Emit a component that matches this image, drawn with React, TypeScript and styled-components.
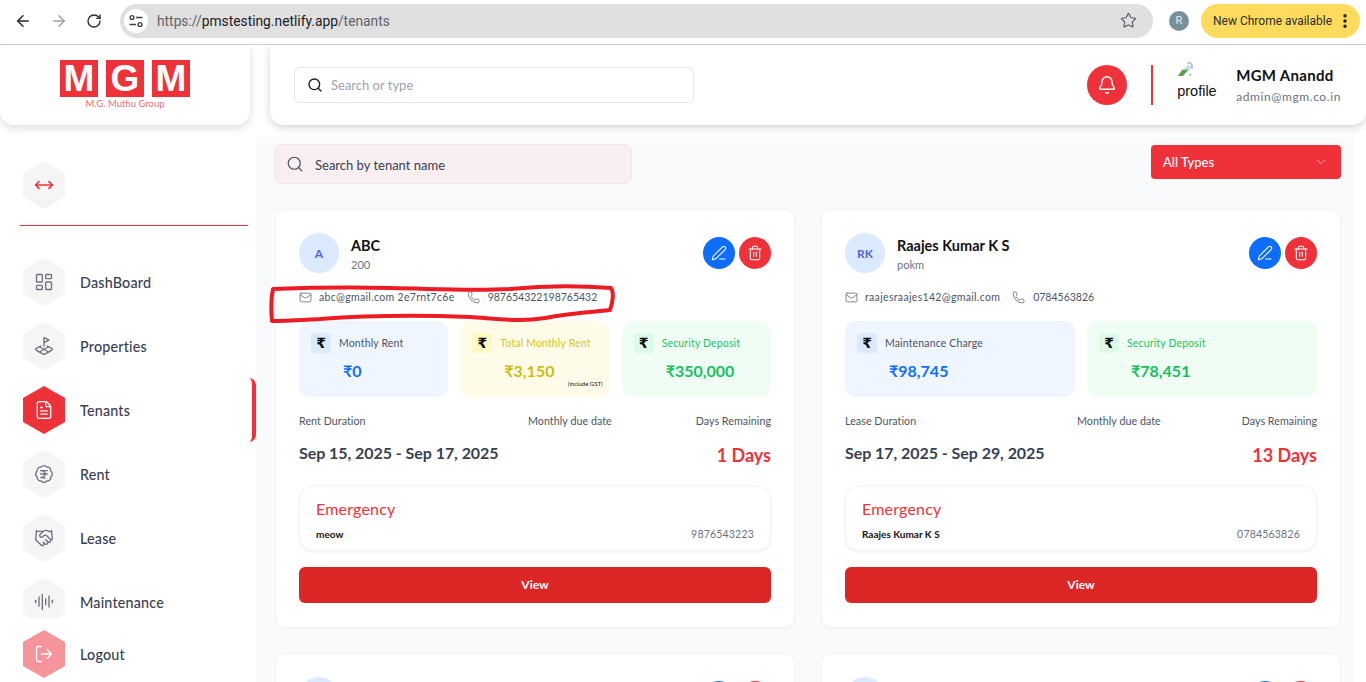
import React from "react";
import styled, { createGlobalStyle } from "styled-components";
import {
	ArrowLeft, ArrowRight, AudioLines, BadgeIndianRupee, Bell, ChevronDown, EllipsisVertical, FileText,
	Handshake, LandPlot, LayoutDashboard, LogOut, Mail, MoveHorizontal, PenLine, Phone, RotateCw, Search,
	Star, Trash2
} from "lucide-react";

const RED = "#ef3239";
const APP_FONT = `"Lato", "Noto Sans", sans-serif`;

const GlobalStyle = createGlobalStyle`
	html, body {
		margin: 0;
		height: 100%;
		overflow: hidden;
		background: #fff;
	}
	* { box-sizing: border-box; }
	body { font-family: ${APP_FONT}; }
`;

type Tone = "blue" | "yellow" | "green";

const TONES: Record<Tone, { bg: string; chip: string; label: string; value: string }> = {
	blue: { bg: "#eff6ff", chip: "#dbeafe", label: "#4b5563", value: "#0d6efd" },
	yellow: { bg: "#fefce8", chip: "#fef9c3", label: "#d6c422", value: "#cabd15" },
	green: { bg: "#f0fdf4", chip: "#dcfce7", label: "#22c55e", value: "#16c060" },
};

const navItems = [
	{ label: "DashBoard", icon: LayoutDashboard },
	{ label: "Properties", icon: LandPlot },
	{ label: "Tenants", icon: FileText, active: true },
	{ label: "Rent", icon: BadgeIndianRupee },
	{ label: "Lease", icon: Handshake },
	{ label: "Maintenance", icon: AudioLines },
];

const tenants = [
	{
		initials: "A", name: "ABC", sub: "200", email: "abc@gmail.com 2e7rnt7c6e", phone: "987654322198765432",
		stats: [
			{ tone: "blue" as Tone, label: "Monthly Rent", value: "₹0" },
			{ tone: "yellow" as Tone, label: "Total Monthly Rent", value: "₹3,150", note: "(include GST)" },
			{ tone: "green" as Tone, label: "Security Deposit", value: "₹350,000" },
		],
		durationLabel: "Rent Duration", dueAt: 229, duration: "Sep 15, 2025 - Sep 17, 2025", days: "1 Days",
		contact: "meow", contactPhone: "9876543223",
	},
	{
		initials: "RK", name: "Raajes Kumar K S", sub: "pokm", email: "raajesraajes142@gmail.com", phone: "0784563826",
		stats: [
			{ tone: "blue" as Tone, label: "Maintenance Charge", value: "₹98,745" },
			{ tone: "green" as Tone, label: "Security Deposit", value: "₹78,451" },
		],
		durationLabel: "Lease Duration", dueAt: 232, duration: "Sep 17, 2025 - Sep 29, 2025", days: "13 Days",
		contact: "Raajes Kumar K S", contactPhone: "0784563826",
	},
];

const TenantActions = () => (
	<Actions>
		<RoundButton $bg="#0d6efd"><PenLine size={16} strokeWidth={1.6} /></RoundButton>
		<RoundButton $bg={RED}><Trash2 size={16} strokeWidth={1.6} /></RoundButton>
	</Actions>
);

export default function App(): React.ReactElement {
	return (
		<Root>
			<GlobalStyle />
			<BrowserBar>
				<BrowserIcon $left={14}><ArrowLeft size={18} strokeWidth={2} /></BrowserIcon>
				<BrowserIcon $left={18} $muted><ArrowRight size={18} strokeWidth={2} /></BrowserIcon>
				<BrowserIcon $left={18}><RotateCw size={16} strokeWidth={2} /></BrowserIcon>
				<Omnibox>
					<TuneBadge>
						<svg width="16" height="16" viewBox="0 0 16 16" fill="none" stroke="#3c4043" strokeWidth="1.4">
							<circle cx="4" cy="4.5" r="1.9" />
							<path d="M8 4.5h6.5M1.5 11.5H8" />
							<circle cx="12" cy="11.5" r="1.9" />
						</svg>
					</TuneBadge>
					<UrlText>https://<b>pmstesting.netlify.app</b>/tenants</UrlText>
					<Star size={17} strokeWidth={1.7} color="#5f6368" />
				</Omnibox>
				<ChromeAvatar>R</ChromeAvatar>
				<UpdatePill>
					New Chrome available
					<EllipsisVertical size={18} strokeWidth={2.6} color="#1f1f1f" />
				</UpdatePill>
			</BrowserBar>

			<Page>
				<Sidebar>
					<LogoCard>
						<LogoMark>
							<LogoTile>M</LogoTile>
							<LogoTile>G</LogoTile>
							<LogoTile>M</LogoTile>
						</LogoMark>
						<LogoCaption>M.G. Muthu Group</LogoCaption>
					</LogoCard>
					<ToggleRow>
						<Hex><MoveHorizontal size={20} strokeWidth={2} color={RED} /></Hex>
					</ToggleRow>
					<SideRule />
					<NavList>
						{navItems.map((item) => {
							const Icon = item.icon;
							return (
								<NavItem key={item.label}>
									<Hex $active={item.active}>
										<Icon size={20} strokeWidth={1.6} color={item.active ? "#fff" : "#6b7280"} />
									</Hex>
									<NavLabel>{item.label}</NavLabel>
									{item.active && <ActiveMarker />}
								</NavItem>
							);
						})}
					</NavList>
					<SideFooter>
						<NavItem>
							<Hex $logout><LogOut size={20} strokeWidth={1.6} color="#fff" /></Hex>
							<NavLabel>Logout</NavLabel>
						</NavItem>
					</SideFooter>
				</Sidebar>

				<Main>
					<TopBar>
						<TopSearch>
							<Search size={16} strokeWidth={2} color="#111827" />
							<span>Search or type</span>
						</TopSearch>
						<TopRight>
							<BellButton><Bell size={20} strokeWidth={1.7} /></BellButton>
							<TopDivider />
							<BrokenPhoto>
								<svg width="16" height="16" viewBox="0 0 16 16" fill="none">
									<path d="M1 14 5 8l7-1-6 7z" fill="#5c9e4a" />
									<path d="M5 8 11 2.5l3.5 2-1 3-1.5-.5z" fill="#cfe0f2" />
									<path d="M10 1h3.5L15 3v4M12.5 13.5 14 12" stroke="#9aa0a6" strokeWidth="1.2" />
								</svg>
								<span>profile</span>
							</BrokenPhoto>
							<UserBlock>
								<UserName>MGM Anandd</UserName>
								<UserMail>admin@mgm.co.in</UserMail>
							</UserBlock>
						</TopRight>
					</TopBar>

					<Content>
						<Filters>
							<TenantSearch>
								<Search size={18} strokeWidth={1.6} color="#4b5563" />
								<span>Search by tenant name</span>
							</TenantSearch>
							<TypeSelect>
								All Types
								<ChevronDown size={14} strokeWidth={1.5} color="#fbc5c7" />
							</TypeSelect>
						</Filters>

						<CardGrid>
							{tenants.map((t) => (
								<Card key={t.name}>
									<CardHead>
										<Avatar>{t.initials}</Avatar>
										<NameBlock>
											<TenantName>{t.name}</TenantName>
											<TenantSub>{t.sub}</TenantSub>
										</NameBlock>
										<TenantActions />
									</CardHead>
									<ContactRow>
										<Mail size={13} strokeWidth={1.6} color="#6b7280" />
										<ContactText>{t.email}</ContactText>
										<Phone size={13} strokeWidth={1.6} color="#6b7280" />
										<ContactPhone>{t.phone}</ContactPhone>
									</ContactRow>
									<Stats>
										{t.stats.map((s) => (
											<StatBox key={s.label} $tone={s.tone}>
												<StatTop>
													<RupeeChip $tone={s.tone}>₹</RupeeChip>
													<StatLabel $tone={s.tone}>{s.label}</StatLabel>
												</StatTop>
												<StatValue $tone={s.tone}>{s.value}</StatValue>
												{s.note && <StatNote>{s.note}</StatNote>}
											</StatBox>
										))}
									</Stats>
									<DurationGrid $dueAt={t.dueAt}>
										<SmallLabel>{t.durationLabel}</SmallLabel>
										<SmallLabel>Monthly due date</SmallLabel>
										<SmallLabel>Days Remaining</SmallLabel>
									</DurationGrid>
									<DateRow>
										<DateText>{t.duration}</DateText>
										<DaysText>{t.days}</DaysText>
									</DateRow>
									<EmergencyBox>
										<EmergencyTitle>Emergency</EmergencyTitle>
										<EmergencyRow>
											<EmergencyName>{t.contact}</EmergencyName>
											<EmergencyPhone>{t.contactPhone}</EmergencyPhone>
										</EmergencyRow>
									</EmergencyBox>
									<ViewButton>View</ViewButton>
								</Card>
							))}
							<Card>
								<CardHead><Avatar /><NameBlock /><TenantActions /></CardHead>
							</Card>
							<Card>
								<CardHead><Avatar /><NameBlock /><TenantActions /></CardHead>
							</Card>
						</CardGrid>
					</Content>
				</Main>
			</Page>

			<Annotation viewBox="0 0 1366 682" fill="none">
				<path
					d="M273 289C300 288 340 287 390 288C440 289 470 291 510 289C550 285 585 286 611 288C614 292 613 302 610 310C590 312 565 314 545 318C520 322 500 319 470 317C420 315 360 316 320 319C300 320 285 321 272 321C271 310 271 298 273 289Z"
					stroke="#ec1c24"
					strokeWidth="4"
					strokeLinejoin="round"
				/>
			</Annotation>
		</Root>
	);
}

const Root = styled.div`
	position: relative;
	width: 1366px;
	height: 682px;
	overflow: hidden;
	background: #fff;
`;

const BrowserBar = styled.div`
	display: flex;
	align-items: center;
	height: 45px;
	padding-bottom: 3px;
	background: #fff;
	border-bottom: 1px solid #d0d0d0;
	font-family: "Roboto", "Open Sans", sans-serif;
`;

const BrowserIcon = styled.span<{ $left: number; $muted?: boolean }>`
	display: flex;
	margin-left: ${(p) => p.$left}px;
	color: ${(p) => (p.$muted ? "#a3a3a3" : "#2b2b2b")};
`;

const Omnibox = styled.div`
	display: flex;
	align-items: center;
	width: 1033px;
	height: 34px;
	margin-left: 18px;
	padding: 0 16px 0 4px;
	border-radius: 17px;
	background: #e0e0e0;
`;

const TuneBadge = styled.span`
	display: flex;
	align-items: center;
	justify-content: center;
	width: 24px;
	height: 24px;
	border-radius: 50%;
	background: #fff;
`;

const UrlText = styled.span`
	flex: 1;
	margin-left: 9px;
	font-size: 13.8px;
	color: #5f6368;

	b {
		font-weight: 400;
		color: #202124;
	}
`;

const ChromeAvatar = styled.span`
	display: flex;
	align-items: center;
	justify-content: center;
	width: 20px;
	height: 20px;
	margin-left: 16px;
	border-radius: 50%;
	background: #78909c;
	color: #e8eef1;
	font-size: 11px;
`;

const UpdatePill = styled.div`
	display: flex;
	align-items: center;
	justify-content: space-between;
	width: 159px;
	height: 34px;
	margin-left: 12px;
	padding: 0 6px 0 12px;
	border-radius: 17px;
	background: #fedb5c;
	color: #2b2b2b;
	font-size: 12px;
	white-space: nowrap;
`;

const Page = styled.div`
	display: flex;
	height: 637px;
`;

const Sidebar = styled.aside`
	display: flex;
	flex-direction: column;
	flex: 0 0 256px;
	background: #fff;
`;

const LogoCard = styled.div`
	flex: 0 0 80px;
	width: 250px;
	padding-top: 15px;
	border-radius: 0 0 14px 14px;
	background: #fff;
	box-shadow: 0 3px 8px rgba(0, 0, 0, 0.14);
	text-align: center;
`;

const LogoMark = styled.div`
	display: flex;
	justify-content: center;
	gap: 8px;
`;

const LogoTile = styled.span`
	display: flex;
	align-items: center;
	justify-content: center;
	width: 38px;
	height: 37px;
	background: ${RED};
	color: #fff;
	font-family: "Liberation Sans", sans-serif;
	font-size: 37px;
	font-weight: 700;
	line-height: 1;
`;

const LogoCaption = styled.div`
	margin-top: 1px;
	color: #ee6b73;
	font-size: 9.5px;
	line-height: 12px;
`;

const ToggleRow = styled.div`
	padding: 36px 0 0 23px;
`;

const Hex = styled.span<{ $active?: boolean; $logout?: boolean }>`
	display: flex;
	flex: 0 0 42px;
	align-items: center;
	justify-content: center;
	width: 42px;
	height: 48px;
	clip-path: polygon(50% 0, 100% 25%, 100% 75%, 50% 100%, 0 75%, 0 25%);
	background: ${(p) => (p.$active ? RED : p.$logout ? "#f5949b" : "#f5f5f6")};
`;

const SideRule = styled.div`
	height: 1px;
	margin: 16px 8px 0 20px;
	background: ${RED};
`;

const NavList = styled.nav`
	display: flex;
	flex-direction: column;
	flex: 1;
	gap: 16px;
	min-height: 0;
	padding-top: 32px;
	overflow: hidden;
`;

const NavItem = styled.div`
	position: relative;
	display: flex;
	flex: 0 0 48px;
	align-items: center;
	gap: 15px;
	padding-left: 23px;
`;

const NavLabel = styled.span`
	color: #374151;
	font-size: 14.3px;
	font-weight: 500;
	letter-spacing: 0.2px;
`;

const ActiveMarker = styled.span`
	position: absolute;
	top: -8px;
	right: 0;
	width: 7px;
	height: 64px;
	border-right: 4px solid ${RED};
	border-radius: 0 8px 8px 0;
`;

const SideFooter = styled.div`
	flex: 0 0 64px;
	padding-top: 12px;
	background: #fff;
`;

const Main = styled.main`
	display: flex;
	flex-direction: column;
	flex: 1;
	min-width: 0;
	background: #fff;
`;

const TopBar = styled.header`
	display: flex;
	flex: 0 0 80px;
	align-items: center;
	justify-content: space-between;
	margin-left: 14px;
	padding: 0 25px 0 24px;
	border-radius: 0 0 14px 14px;
	background: #fff;
	box-shadow: 0 3px 9px rgba(0, 0, 0, 0.16);
`;

const TopSearch = styled.div`
	display: flex;
	align-items: center;
	gap: 8px;
	width: 400px;
	height: 36px;
	padding-left: 12px;
	border: 1px solid #e5e7eb;
	border-radius: 6px;
	color: #9ca3af;
	font-size: 13px;
`;

const TopRight = styled.div`
	display: flex;
	align-items: center;
`;

const BellButton = styled.span`
	display: flex;
	align-items: center;
	justify-content: center;
	width: 40px;
	height: 40px;
	border-radius: 50%;
	background: ${RED};
	color: #fff;
`;

const TopDivider = styled.span`
	width: 2px;
	height: 40px;
	margin: 0 24px;
	background: ${RED};
`;

const BrokenPhoto = styled.div`
	display: flex;
	flex-direction: column;
	width: 40px;
	height: 42px;
	margin-top: -4px;
	overflow: hidden;
	font-family: "Liberation Sans", sans-serif;
	font-size: 14.5px;
	line-height: 18px;
	color: #111;

	span {
		margin-top: 4px;
		white-space: nowrap;
	}
`;

const UserBlock = styled.div`
	margin-left: 19px;
`;

const UserName = styled.div`
	color: #111;
	font-size: 15px;
	font-weight: 700;
	line-height: 20px;
	letter-spacing: 0.3px;
`;

const UserMail = styled.div`
	margin-top: 4px;
	color: #6b7280;
	font-size: 12px;
	line-height: 16px;
	letter-spacing: 0.6px;
`;

const Content = styled.section`
	flex: 1;
	min-height: 0;
	margin: 12px 12px 0 0;
	padding: 7px 13px 0 19px;
	overflow: hidden;
	background: #f9fafb;
`;

const Filters = styled.div`
	display: flex;
	align-items: flex-start;
	justify-content: space-between;
	height: 65px;
`;

const TenantSearch = styled.div`
	display: flex;
	align-items: center;
	gap: 11px;
	width: 358px;
	height: 40px;
	margin-left: -1px;
	padding-left: 11px;
	border: 1px solid #f3e3e3;
	border-radius: 8px;
	background: #f9eff0;
	color: #374151;
	font-size: 13px;

	span {
		padding-top: 1px;
	}
`;

const TypeSelect = styled.div`
	display: flex;
	align-items: center;
	justify-content: space-between;
	width: 190px;
	height: 34px;
	margin-top: 1px;
	padding: 0 13px 0 12px;
	border-radius: 4px;
	background: ${RED};
	color: #fff;
	font-size: 13px;
	font-weight: 500;
`;

const CardGrid = styled.div`
	display: grid;
	grid-template-columns: 520px 520px;
	gap: 25px 26px;
`;

const Card = styled.article`
	height: 419px;
	padding: 23px;
	border: 1px solid #f3f4f6;
	border-radius: 10px;
	background: #fff;
	box-shadow: 0 1px 2px rgba(0, 0, 0, 0.04);
`;

const CardHead = styled.div`
	display: flex;
	align-items: center;
	height: 40px;
`;

const Avatar = styled.span`
	display: flex;
	flex: 0 0 40px;
	align-items: center;
	justify-content: center;
	height: 40px;
	border-radius: 50%;
	background: #dbeafe;
	color: #4f63d9;
	font-size: 12px;
	font-weight: 700;
`;

const NameBlock = styled.div`
	flex: 1;
	margin-left: 12px;
`;

const TenantName = styled.div`
	color: #111;
	font-size: 14.5px;
	font-weight: 700;
	line-height: 21px;
`;

const TenantSub = styled.div`
	margin-top: 2px;
	color: #6b7280;
	font-size: 11px;
	line-height: 14px;
`;

const Actions = styled.div`
	display: flex;
	gap: 4px;
`;

const RoundButton = styled.span<{ $bg: string }>`
	display: flex;
	align-items: center;
	justify-content: center;
	width: 32px;
	height: 32px;
	border-radius: 50%;
	background: ${(p) => p.$bg};
	color: #fff;
`;

const ContactRow = styled.div`
	display: flex;
	align-items: center;
	height: 16px;
	margin-top: 16px;
`;

const ContactText = styled.span`
	margin: 0 12px 0 7px;
	color: #4b5563;
	font-size: 10.5px;
	letter-spacing: 0.33px;
`;

const ContactPhone = styled(ContactText)`
	margin-left: 8px;
	letter-spacing: 0;
`;

const Stats = styled.div`
	display: flex;
	gap: 12px;
	margin-top: 16px;
`;

const StatBox = styled.div<{ $tone: Tone }>`
	position: relative;
	flex: 1;
	height: 76px;
	padding: 12px;
	border-radius: 10px;
	background: ${(p) => TONES[p.$tone].bg};
`;

const StatTop = styled.div`
	display: flex;
	align-items: center;
	gap: 8px;
`;

const RupeeChip = styled.span<{ $tone: Tone }>`
	display: flex;
	align-items: center;
	justify-content: center;
	width: 20px;
	height: 20px;
	border-radius: 4px;
	background: ${(p) => TONES[p.$tone].chip};
	color: #111;
	font-family: "DejaVu Sans", sans-serif;
	font-size: 14px;
	font-weight: 700;
`;

const StatLabel = styled.span<{ $tone: Tone }>`
	color: ${(p) => TONES[p.$tone].label};
	font-size: 10.5px;
	letter-spacing: 0.15px;
	white-space: nowrap;
`;

const StatValue = styled.div<{ $tone: Tone }>`
	margin: 7px 0 0 32px;
	color: ${(p) => TONES[p.$tone].value};
	font-family: ${APP_FONT};
	font-size: 16px;
	font-weight: 700;
	line-height: 22px;
`;

const StatNote = styled.span`
	position: absolute;
	right: 7px;
	bottom: 9px;
	color: #111;
	font-size: 6px;
	line-height: 8px;
`;

const DurationGrid = styled.div<{ $dueAt: number }>`
	display: grid;
	grid-template-columns: ${(p) => p.$dueAt}px 1fr auto;
	margin-top: 17px;
`;

const SmallLabel = styled.span`
	color: #4b5563;
	font-size: 10.7px;
	line-height: 14px;
	letter-spacing: 0.05px;
`;

const DateRow = styled.div`
	display: flex;
	align-items: flex-end;
	justify-content: space-between;
	height: 26px;
	margin-top: 12px;
`;

const DateText = styled.span`
	margin-bottom: 3px;
	color: #374151;
	font-size: 16px;
	font-weight: 700;
	line-height: 20px;
	letter-spacing: -0.05px;
`;

const DaysText = styled.span`
	color: ${RED};
	font-size: 18px;
	font-weight: 700;
	line-height: 22px;
`;

const EmergencyBox = styled.div`
	height: 65px;
	margin-top: 20px;
	padding: 12px 16px 0 16px;
	border: 1px solid #f3f4f6;
	border-radius: 14px;
	background: #fff;
	box-shadow: 0 1px 3px rgba(0, 0, 0, 0.07);
`;

const EmergencyTitle = styled.div`
	color: ${RED};
	font-size: 16px;
	line-height: 20px;
	letter-spacing: 0.2px;
`;

const EmergencyRow = styled.div`
	display: flex;
	align-items: center;
	justify-content: space-between;
	margin-top: 9px;
`;

const EmergencyName = styled.span`
	color: #111;
	font-size: 10px;
	font-weight: 700;
`;

const EmergencyPhone = styled.span`
	color: #6b7280;
	font-size: 10.5px;
	letter-spacing: 0.2px;
`;

const ViewButton = styled.div`
	display: flex;
	align-items: center;
	justify-content: center;
	height: 36px;
	margin-top: 16px;
	padding-bottom: 1px;
	border-radius: 6px;
	background: #dc2626;
	color: #fff;
	font-size: 12px;
	font-weight: 700;
`;

const Annotation = styled.svg`
	position: absolute;
	top: 0;
	left: 0;
	width: 1366px;
	height: 682px;
	pointer-events: none;
`;
